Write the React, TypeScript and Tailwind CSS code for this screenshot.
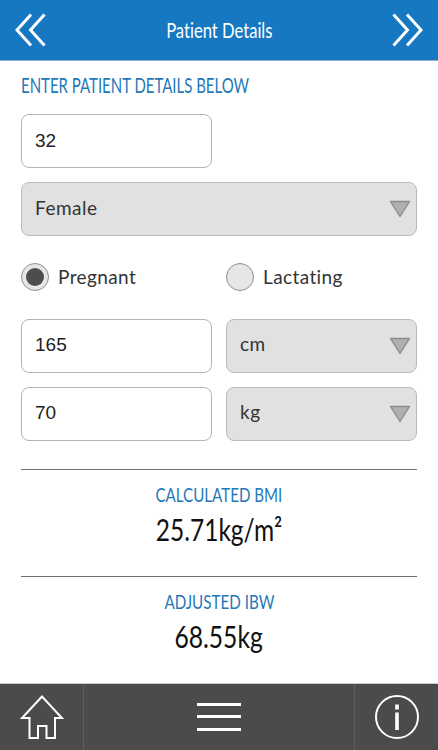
const FONT = "font-['Lato','Open_Sans',sans-serif]";

function Narrow({ className, children }: { className: string; children: React.ReactNode }) {
  return (
    <span className={`inline-block whitespace-nowrap font-['Lato',sans-serif] [font-variant-ligatures:none] ${className}`}>
      {children}
    </span>
  );
}

function TextBox({ value }: { value: string }) {
  return (
    <div className="flex h-[54px] w-[191px] items-center rounded-lg border border-[#b4b4b4] bg-white pl-[13px] font-['Liberation_Sans',sans-serif] text-[19px] text-[#222]">
      {value}
    </div>
  );
}

function Select({ value, wide }: { value: string; wide?: boolean }) {
  return (
    <div className={`flex h-[54px] items-center justify-between rounded-lg border border-[#bbb] bg-[#e1e1e1] pl-[13px] pr-[5px] ${FONT} text-[19px] tracking-[0.5px] text-[#333] [font-variant-ligatures:none] ${wide ? "w-full" : "w-[191px]"}`}>
      <span className="-translate-y-[1px]">{value}</span>
      <svg width="22" height="18" viewBox="0 0 22 18">
        <path d="M1.5 1.5H20.5L11 16.5Z" fill="#b0b0b0" stroke="#8c8c8c" strokeWidth="1.4" strokeLinejoin="round" />
      </svg>
    </div>
  );
}

function Radio({ label, checked }: { label: string; checked?: boolean }) {
  return (
    <div className="flex items-center gap-[9px]">
      <div className="flex h-[28px] w-[28px] items-center justify-center rounded-full border border-[#8f8f8f] bg-[#e6e6e6]">
        {checked && <div className="h-[18px] w-[18px] rounded-full bg-[#4d4d4d]" />}
      </div>
      <span className={`${FONT} text-[19px] tracking-[0.4px] text-[#333] [font-variant-ligatures:none]`}>{label}</span>
    </div>
  );
}

export default function App() {
  return (
    <div className="flex h-[750px] w-[438px] flex-col overflow-hidden bg-white">
      <header className="flex h-[61px] shrink-0 items-center justify-between border-b border-[#8fb4d2] bg-[#1578c0] px-[15px]">
        <svg width="31" height="34" viewBox="0 0 31 34" fill="none" stroke="#fff" strokeWidth="3">
          <path d="M16 1.5 2 17l14 15.5M29.5 1.5 15.5 17l14 15.5" />
        </svg>
        <Narrow className="scale-x-[0.79] text-[21px] text-white">Patient Details</Narrow>
        <svg width="31" height="34" viewBox="0 0 31 34" fill="none" stroke="#fff" strokeWidth="3">
          <path d="M1.5 1.5 15.5 17 1.5 32.5M15 1.5 29 17 15 32.5" />
        </svg>
      </header>

      <main className="flex flex-1 flex-col px-[21px]">
        <div className="mt-[10px] h-[28px]">
          <Narrow className="origin-left scale-x-[0.73] text-[20.5px] leading-[28px] text-[#1f78b8]">ENTER PATIENT DETAILS BELOW</Narrow>
        </div>
        <div className="mt-[15px]"><TextBox value="32" /></div>
        <div className="mt-[14px]"><Select value="Female" wide /></div>
        <div className="mt-[27px] flex">
          <div className="w-[205px]"><Radio label="Pregnant" checked /></div>
          <Radio label="Lactating" />
        </div>
        <div className="mt-[27px] flex justify-between">
          <TextBox value="165" />
          <Select value="cm" />
        </div>
        <div className="mt-[14px] flex justify-between">
          <TextBox value="70" />
          <Select value="kg" />
        </div>

        <div className="mt-[28px] flex h-[107px] flex-col items-center border-t-[1.5px] border-[#6f6f6f]">
          <Narrow className="mt-[10px] scale-x-[0.756] text-[20px] leading-[28px] text-[#1f78b8]">CALCULATED BMI</Narrow>
          <Narrow className="mt-[1px] scale-x-[0.79] text-[31px] leading-[40px] text-[#111]">25.71kg/m²</Narrow>
        </div>
        <div className="flex flex-col items-center border-t-[1.5px] border-[#6f6f6f]">
          <Narrow className="mt-[10px] scale-x-[0.76] text-[20px] leading-[28px] text-[#1f78b8]">ADJUSTED IBW</Narrow>
          <Narrow className="mt-[1px] scale-x-[0.795] text-[31px] leading-[40px] text-[#111]">68.55kg</Narrow>
        </div>
      </main>

      <footer className="flex h-[67px] shrink-0 border-t border-[#c8c8c8] bg-[#4b4b4b]">
        <div className="flex w-[84px] items-center justify-center border-r-[1.5px] border-[#5e5e5e] pb-[1px] pl-[1px]">
          <svg width="44" height="44" viewBox="0 0 44 44" fill="none" stroke="#fff" strokeWidth="2">
            <path d="M22 1.5 2 23h7.5v20H18V31h8.5v12H35V23h7Z" />
          </svg>
        </div>
        <div className="flex flex-1 items-center justify-center pb-[1px]">
          <div className="flex w-[44px] flex-col gap-[9.5px]">
            <div className="h-[3px] bg-white" />
            <div className="h-[3px] bg-white" />
            <div className="h-[3px] bg-white" />
          </div>
        </div>
        <div className="flex w-[84px] items-center justify-center border-l-[1.5px] border-[#5e5e5e] pb-[1px]">
          <svg width="44" height="44" viewBox="0 0 44 44" fill="none" stroke="#fff">
            <circle cx="22" cy="22" r="21" strokeWidth="2" />
            <path d="M22 17.5v17.5" strokeWidth="3.6" />
            <path d="M22 9.5v5" strokeWidth="3.6" />
          </svg>
        </div>
      </footer>
    </div>
  );
}
